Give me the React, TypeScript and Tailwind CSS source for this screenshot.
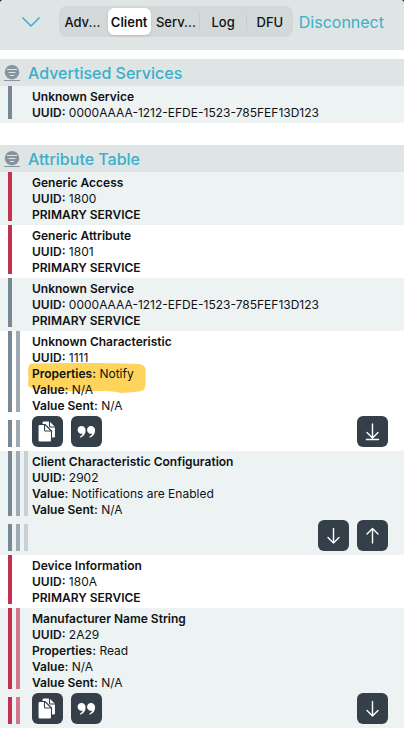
import React from 'react';

type Tone = 'red' | 'slate';

interface Line {
  label: string;
  value?: string;
  marked?: boolean;
}

interface Attribute {
  lines: Line[];
  tone: Tone;
  depth: number;
  shaded?: boolean;
  left?: IconName[];
  right?: IconName[];
}

type IconName = 'copy' | 'quote' | 'subscribe' | 'read' | 'write';

const barColors: Record<Tone, string[]> = {
  red: ['bg-[#c2314f]', 'bg-[#d5768a]'],
  slate: ['bg-[#788895]', 'bg-[#9fabb4]', 'bg-[#c9d0d5]'],
};

const iconLabels: Record<IconName, string> = {
  copy: 'Copy value',
  quote: 'Change format',
  subscribe: 'Subscribe',
  read: 'Read value',
  write: 'Write value',
};

const advertised: Attribute[] = [
  {
    tone: 'slate',
    depth: 1,
    shaded: true,
    lines: [
      { label: 'Unknown Service' },
      { label: 'UUID:', value: '0000AAAA-1212-EFDE-1523-785FEF13D123' },
    ],
  },
];

const attributes: Attribute[] = [
  {
    tone: 'red',
    depth: 1,
    shaded: true,
    lines: [{ label: 'Generic Access' }, { label: 'UUID:', value: '1800' }, { label: 'PRIMARY SERVICE' }],
  },
  {
    tone: 'red',
    depth: 1,
    lines: [{ label: 'Generic Attribute' }, { label: 'UUID:', value: '1801' }, { label: 'PRIMARY SERVICE' }],
  },
  {
    tone: 'slate',
    depth: 1,
    shaded: true,
    lines: [
      { label: 'Unknown Service' },
      { label: 'UUID:', value: '0000AAAA-1212-EFDE-1523-785FEF13D123' },
      { label: 'PRIMARY SERVICE' },
    ],
  },
  {
    tone: 'slate',
    depth: 2,
    lines: [
      { label: 'Unknown Characteristic' },
      { label: 'UUID:', value: '1111' },
      { label: 'Properties:', value: 'Notify', marked: true },
      { label: 'Value:', value: 'N/A' },
      { label: 'Value Sent:', value: 'N/A' },
    ],
    left: ['copy', 'quote'],
    right: ['subscribe'],
  },
  {
    tone: 'slate',
    depth: 3,
    shaded: true,
    lines: [
      { label: 'Client Characteristic Configuration' },
      { label: 'UUID:', value: '2902' },
      { label: 'Value:', value: 'Notifications are Enabled' },
      { label: 'Value Sent:', value: 'N/A' },
    ],
    right: ['read', 'write'],
  },
  {
    tone: 'red',
    depth: 1,
    lines: [{ label: 'Device Information' }, { label: 'UUID:', value: '180A' }, { label: 'PRIMARY SERVICE' }],
  },
  {
    tone: 'red',
    depth: 2,
    shaded: true,
    lines: [
      { label: 'Manufacturer Name String' },
      { label: 'UUID:', value: '2A29' },
      { label: 'Properties:', value: 'Read' },
      { label: 'Value:', value: 'N/A' },
      { label: 'Value Sent:', value: 'N/A' },
    ],
    left: ['copy', 'quote'],
    right: ['read'],
  },
];

function Glyph({ name }: { name: IconName }) {
  if (name === 'copy') {
    return (
      <svg viewBox="0 0 31 31" className="size-full" fill="#fff" stroke="#343f49" strokeWidth="1.1" strokeLinejoin="round">
        <path d="M11.500 5h6.500l5.500 5.500v10a1.500 1.500 0 0 1-1.500 1.500H11.500A1.500 1.500 0 0 1 10 20.500v-14A1.500 1.500 0 0 1 11.500 5z" />
        <path d="M17.500 5v5a1 1 0 0 0 1 1h5" fill="none" />
        <path d="M7.500 8.500H13l6.500 6.500v9.500A1.500 1.500 0 0 1 18 26H7.500A1.500 1.500 0 0 1 6 24.500V10a1.500 1.500 0 0 1 1.500-1.500z" />
        <path d="M12.500 8.500V14a1 1 0 0 0 1 1h6" fill="none" />
      </svg>
    );
  }
  if (name === 'quote') {
    return (
      <svg viewBox="0 0 31 31" className="size-full" fill="#fff">
        <path d="M10.500 10a3.900 3.900 0 1 0 1.200 7.600c-.4 1.400-1.300 2.400-2.900 3.200l.4.900c3.500-1.300 5.400-4 5.400-7.300 0-2.700-1.700-4.400-4.100-4.400z" />
        <path d="M20 10a3.900 3.900 0 1 0 1.200 7.600c-.4 1.400-1.300 2.400-2.900 3.200l.4.900c3.500-1.300 5.400-4 5.400-7.300 0-2.700-1.700-4.400-4.100-4.400z" />
      </svg>
    );
  }
  return (
    <svg viewBox="0 0 31 31" className="size-full" fill="none" stroke="#fff" strokeWidth="1.4" strokeLinecap="round" strokeLinejoin="round">
      {name === 'subscribe' && <path d="M15.500 8v13.500M10 16.500l5.500 5.500 5.500-5.500M9.500 23.500h12" />}
      {name === 'read' && <path d="M15.500 8.500v14.500M10 17.500l5.500 5.500 5.500-5.500" />}
      {name === 'write' && <path d="M15.500 23V8.500M10 14l5.500-5.500 5.500 5.500" />}
    </svg>
  );
}

function ActionButton({ name }: { name: IconName }) {
  return (
    <button type="button" aria-label={iconLabels[name]} className="size-[31px] rounded-md bg-[#343f49]">
      <Glyph name={name} />
    </button>
  );
}

function Bars({ tone, depth }: { tone: Tone; depth: number }) {
  return (
    <div className="flex w-8 shrink-0 gap-1 self-stretch pb-1 pl-2">
      {barColors[tone].slice(0, depth).map((color) => (
        <span key={color} className={`w-1 ${color}`} />
      ))}
    </div>
  );
}

function AttributeRow({ item }: { item: Attribute }) {
  return (
    <li className={item.shaded ? 'bg-[#edf2f3]' : 'bg-white'}>
      <div className="flex">
        <Bars tone={item.tone} depth={item.depth} />
        <div className="isolate pt-[3px] pb-[2px] text-[12px] leading-4">
          {item.lines.map((line) => (
            <p key={line.label} className="relative whitespace-nowrap">
              {/* highlighter stroke */}
              {line.marked && (
                <svg
                  viewBox="0 0 120 32"
                  className="absolute -top-1 -left-1 -z-10 h-8 w-[120px]"
                  fill="#ffd45c"
                >
                  <path d="M3 1.500C25 1 75 .5 110 2q7 .5 7.500 5v16q-.5 6-7 6.500-10 1-17 1.500-9-2-18-2-35 1-58-1Q.5 27 0 23 1 16 0 10 0 3 3 1.500z" />
                </svg>
              )}
              <span className="font-semibold">{line.label}</span>
              {line.value && <span> {line.value}</span>}
            </p>
          ))}
        </div>
      </div>
      {item.right && (
        <div className="flex">
          <div className="flex pt-1">
            <Bars tone={item.tone} depth={item.depth} />
          </div>
          <div className="flex flex-1 justify-between pr-4 pb-1">
            <div className="flex gap-2">
              {item.left?.map((name) => <ActionButton key={name} name={name} />)}
            </div>
            <div className="flex gap-2">
              {item.right.map((name) => <ActionButton key={name} name={name} />)}
            </div>
          </div>
        </div>
      )}
    </li>
  );
}

function Section({ title, items }: { title: string; items: Attribute[] }) {
  return (
    <section>
      <div className="flex h-[27px] items-center gap-2 bg-[#dfe4e5] pl-1">
        <svg viewBox="0 0 16 16" className="size-4" fill="none">
          <circle cx="8" cy="7.200" r="7.200" fill="#87939e" />
          <path d="M0 15.500h16" stroke="#87939e" />
          <path d="M3 4.500h10M4.500 7.500h7M6 10.500h4" stroke="#dfe4e5" strokeWidth="1.200" />
        </svg>
        <h2 className="text-[16px] leading-6 font-medium text-[#3aafcb]">{title}</h2>
      </div>
      <ul>
        {items.map((item, index) => (
          <AttributeRow key={index} item={item} />
        ))}
      </ul>
    </section>
  );
}

export default function App() {
  return (
    <div className="bg-white font-['Inter','Liberation_Sans',sans-serif] text-[#101214]">
      <div className="bg-[#1b1d1e]">
        <header className="flex h-[50px] items-start rounded-t-[3px] bg-[#dfe4e5] pt-1.5">
          <button type="button" aria-label="Close" className="mt-1 ml-5 h-6 w-[22px] text-[#3aafcb]">
            <svg viewBox="0 0 22 24" className="size-full" fill="none" stroke="currentColor" strokeWidth="1.5">
              <path d="M2.500 7.500l8.500 8.500L19.500 7.500" />
            </svg>
          </button>
          <nav className="ml-[17px] grid h-[31px] min-w-0 flex-1 grid-cols-5 items-center rounded-lg bg-[#d3d9d9] text-[13px] leading-4 font-medium">
            <button type="button">Adv...</button>
            <button type="button" className="mx-0.5 h-[27px] rounded-md bg-white font-semibold shadow-sm">Client</button>
            <button type="button">Serv...</button>
            <button type="button" className="border-l border-[#c5cccd]">Log</button>
            <button type="button" className="border-l border-[#c5cccd]">DFU</button>
          </nav>
          <button type="button" className="mr-5 ml-1.5 h-8 text-[16px] leading-6 text-[#3aafcb]">Disconnect</button>
        </header>
      </div>
      <main className="flex flex-col gap-[22px] pt-[9px]">
        <Section title="Advertised Services" items={advertised} />
        <Section title="Attribute Table" items={attributes} />
      </main>
    </div>
  );
}
